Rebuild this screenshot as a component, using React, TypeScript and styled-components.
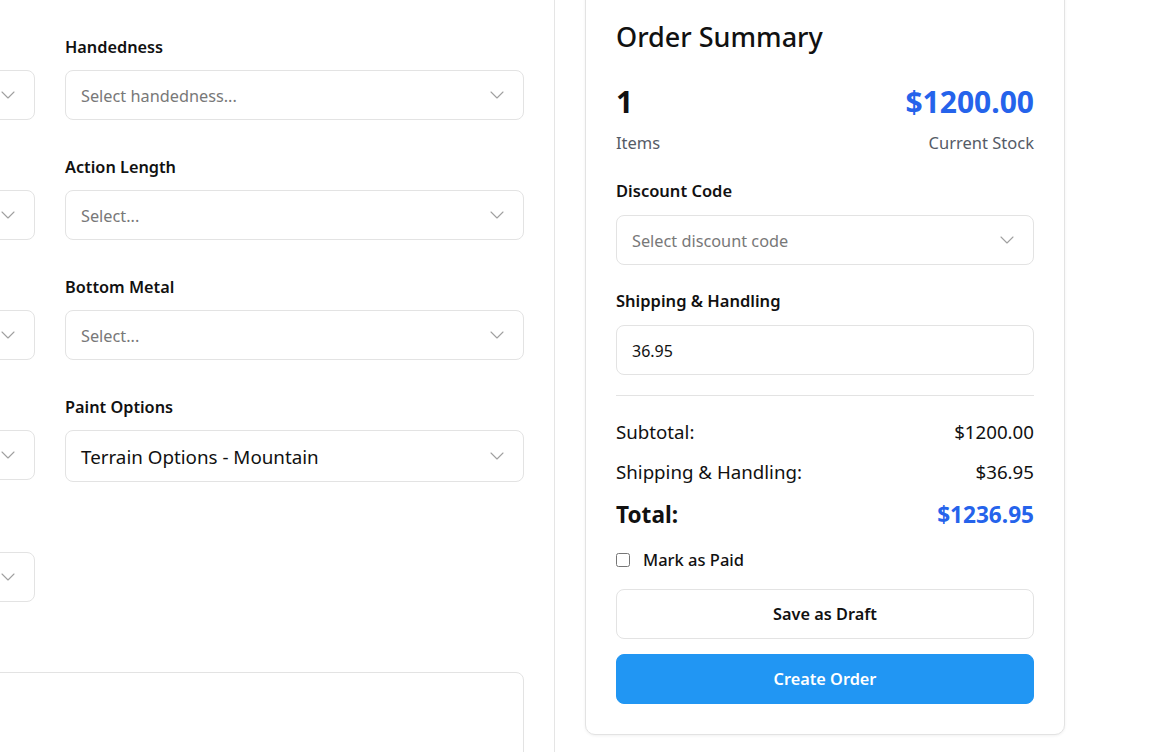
import React from "react";
import styled, { createGlobalStyle } from "styled-components";

const Global = createGlobalStyle`
  html, body { margin: 0; padding: 0; background: #ffffff; }
  body { font-family: "Noto Sans", "Open Sans", sans-serif; color: #111111; }
  * { box-sizing: border-box; }
`;

const Page = styled.div`
  display: flex;
  width: 1161px;
  height: 752px;
  overflow: hidden;
  background: #ffffff;
`;

const LeftPane = styled.div`
  flex: 0 0 555px;
  height: 100%;
  overflow: hidden;
  border-right: 1px solid #e5e5e5;
`;

const FormGrid = styled.div`
  display: grid;
  grid-template-columns: 459px 459px;
  column-gap: 30px;
  row-gap: 36px;
  margin-left: -424px;
  padding-top: 36px;
`;

const Field = styled.div<{ $wide?: boolean }>`
  display: flex;
  flex-direction: column;
  gap: 12px;
  grid-column: ${(p) => (p.$wide ? "1 / span 2" : "auto")};
`;

const Label = styled.label`
  font-size: 16.3px;
  font-weight: 600;
  line-height: 22px;
  color: #111111;
`;

const SelectBox = styled.div<{ $filled?: boolean; $tall?: boolean }>`
  display: flex;
  align-items: center;
  justify-content: space-between;
  height: ${(p) => (p.$tall ? "52px" : "50px")};
  padding: 2px 19px 0 15px;
  border: 1px solid #e3e3e3;
  border-radius: 8px;
  background: #ffffff;
  font-size: ${(p) => (p.$filled ? "18.8px" : "16.3px")};
  color: ${(p) => (p.$filled ? "#111111" : "#787878")};

  svg {
    margin-top: -3px;
  }
`;

const TextArea = styled.div`
  height: 140px;
  border: 1px solid #e3e3e3;
  border-radius: 8px;
  background: #ffffff;
`;

const RightPane = styled.div`
  flex: 0 0 auto;
  padding-left: 30px;
`;

const Card = styled.div`
  width: 480px;
  margin-top: -12px;
  padding: 30px;
  border: 1px solid #e3e3e3;
  border-radius: 10px;
  background: #ffffff;
  box-shadow: 0 1px 3px rgba(0, 0, 0, 0.06);
  display: flex;
  flex-direction: column;
`;

const Title = styled.h2`
  margin: 0;
  font-size: 27px;
  font-weight: 500;
  line-height: 36px;
  color: #111111;
`;

const SplitRow = styled.div<{ $mt: number }>`
  display: flex;
  justify-content: space-between;
  align-items: center;
  margin-top: ${(p) => p.$mt}px;
`;

const BigNumber = styled.span<{ $blue?: boolean }>`
  font-size: 30px;
  font-weight: 700;
  line-height: 36px;
  color: ${(p) => (p.$blue ? "#2563eb" : "#111111")};
`;

const Muted = styled.span`
  font-size: 16.5px;
  line-height: 24px;
  color: #555b66;
`;

const CardLabel = styled.div<{ $mt: number }>`
  margin-top: ${(p) => p.$mt}px;
  margin-bottom: 13px;
  font-size: 16.5px;
  font-weight: 600;
  line-height: 22px;
`;

const InputBox = styled.div`
  display: flex;
  align-items: center;
  height: 50px;
  padding: 1px 15px 0 15px;
  border: 1px solid #e3e3e3;
  border-radius: 8px;
  font-size: 16px;
  color: #111111;
`;

const Divider = styled.hr`
  margin: 20px 0 0 0;
  border: none;
  border-top: 1px solid #e3e3e3;
  height: 0;
`;

const LineText = styled.span`
  font-size: 18.7px;
  line-height: 24px;
  color: #111111;
`;

const TotalText = styled.span<{ $blue?: boolean }>`
  font-size: 22.6px;
  font-weight: 700;
  line-height: 28px;
  color: ${(p) => (p.$blue ? "#2563eb" : "#111111")};
`;

const CheckRow = styled.label`
  display: flex;
  align-items: center;
  gap: 13px;
  margin-top: 20px;
  font-size: 16.5px;
  font-weight: 500;
  line-height: 22px;
  color: #111111;
`;

const Check = styled.input`
  margin: 0;
  width: 14px;
  height: 14px;
`;

const Button = styled.button<{ $primary?: boolean; $mt: number }>`
  height: 50px;
  margin-top: ${(p) => p.$mt}px;
  border-radius: 8px;
  border: 1px solid ${(p) => (p.$primary ? "#2196f3" : "#e3e3e3")};
  background: ${(p) => (p.$primary ? "#2196f3" : "#ffffff")};
  color: ${(p) => (p.$primary ? "#ffffff" : "#111111")};
  font-family: inherit;
  font-size: 16.3px;
  font-weight: 600;
  cursor: pointer;
`;

const Chevron = () => (
  <svg width="14" height="8" viewBox="0 0 14 8" fill="none">
    <polyline points="1,1 7,7 13,1" stroke="#a0a0a0" strokeWidth="1.1" strokeLinecap="round" strokeLinejoin="round" />
  </svg>
);

const Select = ({ text, filled, tall }: { text: string; filled?: boolean; tall?: boolean }) => (
  <SelectBox $filled={filled} $tall={tall}>
    <span>{text}</span>
    <Chevron />
  </SelectBox>
);

export default function App() {
  return (
    <>
      <Global />
      <Page>
        <LeftPane>
          <FormGrid>
            <Field>
              <Label>Stock Type</Label>
              <Select text="Select..." />
            </Field>
            <Field>
              <Label>Handedness</Label>
              <Select text="Select handedness..." />
            </Field>
            <Field>
              <Label>Action Type</Label>
              <Select text="Select..." />
            </Field>
            <Field>
              <Label>Action Length</Label>
              <Select text="Select..." />
            </Field>
            <Field>
              <Label>Barrel Inlet</Label>
              <Select text="Select..." />
            </Field>
            <Field>
              <Label>Bottom Metal</Label>
              <Select text="Select..." />
            </Field>
            <Field>
              <Label>Length of Pull</Label>
              <Select text="Select..." />
            </Field>
            <Field>
              <Label>Paint Options</Label>
              <Select text="Terrain Options - Mountain" filled tall />
            </Field>
            <Field>
              <Label>Other Options</Label>
              <Select text="Select..." />
            </Field>
            <Field />
            <Field $wide>
              <Label>Notes</Label>
              <TextArea />
            </Field>
          </FormGrid>
        </LeftPane>
        <RightPane>
          <Card>
            <Title>Order Summary</Title>
            <SplitRow $mt={29}>
              <BigNumber>1</BigNumber>
              <BigNumber $blue>$1200.00</BigNumber>
            </SplitRow>
            <SplitRow $mt={11}>
              <Muted>Items</Muted>
              <Muted>Current Stock</Muted>
            </SplitRow>
            <CardLabel $mt={25}>Discount Code</CardLabel>
            <Select text="Select discount code" />
            <CardLabel $mt={25}>Shipping &amp; Handling</CardLabel>
            <InputBox>36.95</InputBox>
            <Divider />
            <SplitRow $mt={24}>
              <LineText>Subtotal:</LineText>
              <LineText>$1200.00</LineText>
            </SplitRow>
            <SplitRow $mt={16}>
              <LineText>Shipping &amp; Handling:</LineText>
              <LineText>$36.95</LineText>
            </SplitRow>
            <SplitRow $mt={17}>
              <TotalText>Total:</TotalText>
              <TotalText $blue>$1236.95</TotalText>
            </SplitRow>
            <CheckRow>
              <Check type="checkbox" />
              Mark as Paid
            </CheckRow>
            <Button $mt={18}>Save as Draft</Button>
            <Button $primary $mt={15}>Create Order</Button>
          </Card>
        </RightPane>
      </Page>
    </>
  );
}
